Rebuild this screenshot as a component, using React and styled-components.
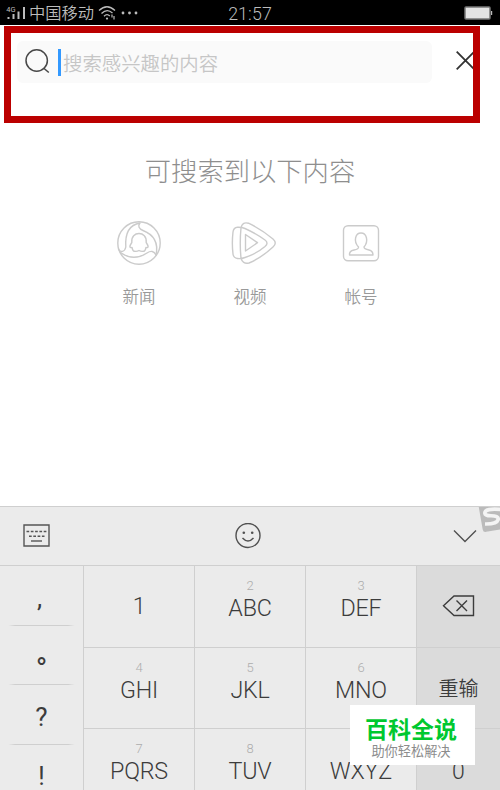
import React from "react";
import styled, { createGlobalStyle } from "styled-components";

const GlobalStyle = createGlobalStyle`
  * {
    box-sizing: border-box;
  }
  body {
    margin: 0;
    background-color: #fff;
    font-family: Roboto, "Noto Sans CJK SC", sans-serif;
  }
  svg {
    display: block;
    flex-shrink: 0;
  }
`;

const Screen = styled.div`
  position: relative;
  display: flex;
  flex-direction: column;
  width: 500px;
  height: 790px;
  overflow: hidden;
  background-color: #fff;
`;

const StatusBar = styled.div`
  display: grid;
  grid-template-columns: 1fr auto 1fr;
  align-items: center;
  height: 25px;
  padding: 0 7px 0 6px;
  background-color: #000;
  color: #bcbcbc;
`;

const StatusGroup = styled.div`
  display: flex;
  align-items: center;
  gap: ${(props) => props.$gap || 0}px;
  justify-content: ${(props) => (props.$end ? "flex-end" : "flex-start")};
`;

const Carrier = styled.span`
  margin: 0 4px 0 3px;
  padding-top: 1px;
  font-size: 16.3px;
  font-weight: 350;
  line-height: 24px;
  white-space: nowrap;
`;

const Clock = styled.span`
  font-size: 17.8px;
  font-weight: 300;
  letter-spacing: 0.1px;
  line-height: 25px;
  padding-left: 1px;
  padding-top: 1px;
`;

const SearchHeader = styled.header`
  display: flex;
  align-items: flex-start;
  height: 98px;
  padding: 16px 24px 0 17px;
`;

const SearchBox = styled.div`
  display: flex;
  align-items: center;
  width: 415px;
  height: 42px;
  padding-left: 8px;
  border-radius: 6px;
  background-color: #fafafa;
`;

const Caret = styled.span`
  width: 3px;
  height: 27px;
  margin: 0 2px 0 8px;
  background-color: #3399ff;
`;

const Placeholder = styled.span`
  color: #c6c6c6;
  font-size: 19.4px;
  font-weight: 350;
  line-height: 28px;
  padding-top: 5px;
`;

const CloseButton = styled.div`
  margin: 10px 0 0 24px;
`;

const Highlight = styled.div`
  position: absolute;
  top: 26px;
  left: 4px;
  width: 476px;
  height: 97px;
  border: 7px solid #bb0000;
`;

const Content = styled.main`
  display: flex;
  flex-direction: column;
  align-items: center;
  height: 383px;
  padding-top: 29px;
`;

const Title = styled.h1`
  margin: 0;
  color: #8e8e8e;
  font-size: 26.3px;
  font-weight: 300;
  line-height: 40px;
`;

const Categories = styled.div`
  display: grid;
  grid-template-columns: repeat(3, 111px);
  margin-top: 28px;
`;

const Category = styled.div`
  display: flex;
  flex-direction: column;
  align-items: center;
  gap: 20px;
  color: #999;
  font-size: 16.5px;
  font-weight: 350;
  line-height: 24px;
`;

const Keyboard = styled.section`
  flex: 1;
  min-height: 0;
  border-top: 1px solid #cfcfcf;
  background-color: #ebebeb;
  color: #3c3c3c;
`;

const Toolbar = styled.div`
  display: grid;
  grid-template-columns: 1fr auto 1fr;
  align-items: center;
  height: 58px;
  padding: 0 23px;
`;

const ToolbarItem = styled.div`
  display: flex;
  justify-content: ${(props) => props.$align || "flex-start"};
  margin-right: ${(props) => props.$offset || 0}px;
`;

const SogouBadge = styled.div`
  position: absolute;
  top: 507px;
  left: 476px;
  width: 24px;
  height: 26px;
  overflow: hidden;
`;

const Keys = styled.div`
  display: grid;
  grid-template-columns: 83px 333px 84px;
  border-top: 1px solid #cfcfcf;
`;

const Punctuation = styled.div`
  display: flex;
  flex-direction: column;
`;

const PunctuationKey = styled.div`
  height: 59.7px;
  padding-right: ${(props) => props.$shift || 0}px;
  padding-top: ${(props) => props.$drop}px;
  font-size: ${(props) => props.$size || 26}px;
  line-height: 30px;
  text-align: center;
  background: linear-gradient(
      90deg,
      transparent 10%,
      #cfcfcf 18%,
      #cfcfcf 82%,
      transparent 90%
    )
    bottom / 100% 1px no-repeat;
`;

const NumberPad = styled.div`
  display: grid;
  grid-template-columns: repeat(3, 111px);
  grid-auto-rows: 81.5px;
`;

const Key = styled.div`
  display: flex;
  flex-direction: column;
  align-items: center;
  border-left: 1px solid #cfcfcf;
  border-bottom: 1px solid #cfcfcf;
  padding-top: 10px;
`;

const Digit = styled.span`
  height: 18px;
  color: #adadad;
  font-size: 13px;
  font-weight: 300;
  line-height: 19px;
`;

const Letters = styled.span`
  font-size: 23.3px;
  font-weight: 300;
  line-height: 28px;
  margin-top: ${(props) => (props.$single ? "-2px" : "0")};
  letter-spacing: -0.2px;
`;

const Actions = styled.div`
  display: grid;
  grid-auto-rows: 81.5px;
  background-color: #dbdbdb;
  border-left: 1px solid #cfcfcf;
`;

const Action = styled.div`
  display: flex;
  align-items: center;
  justify-content: center;
  padding-top: ${(props) => props.$drop || 0}px;
  border-bottom: 1px solid #cfcfcf;
  font-size: ${(props) => props.$size || 20}px;
  font-weight: ${(props) => (props.$size ? 300 : 350)};
`;

const Watermark = styled.div`
  position: absolute;
  left: 350px;
  top: 705px;
  display: flex;
  flex-direction: column;
  align-items: center;
  width: 125px;
  height: 60px;
  padding: 10px 3px 0 0;
  background-color: #fff;
`;

const WatermarkName = styled.strong`
  color: #00c82f;
  font-size: 23px;
  font-weight: 700;
  line-height: 31px;
`;

const WatermarkSlogan = styled.span`
  color: #8c8c8c;
  font-size: 13.2px;
  font-weight: 400;
  line-height: 12px;
`;

const SignalIcon = () => (
  <svg width="20" height="16" viewBox="0 0 20 16" fill="#bcbcbc">
    <text x="0.3" y="6.500" fontSize="7.500" fontFamily="Roboto">
      4G
    </text>
    <path d="M1.500 12h2v2h-2zM6.500 9h2v5h-2zM11.500 6.500h2v7.500h-2zM17 2h2v12h-2z" />
  </svg>
);

const WifiIcon = () => (
  <svg width="18" height="16" viewBox="0 0 18 16" fill="none" stroke="#bcbcbc" strokeWidth="1.3">
    <path d="M1 5.500Q9-2 17 5.500M3.500 8.500Q9 3 14.500 8M6 11.200Q9 8.200 11.800 11" />
    <circle cx="9" cy="13.600" r="1.100" fill="#bcbcbc" stroke="none" />
    <path d="M14 12.500V9.500M16 11v3.500" strokeWidth="1.200" />
  </svg>
);

const DotsIcon = () => (
  <svg width="18" height="4" viewBox="0 0 18 4" fill="#bcbcbc">
    <circle cx="2" cy="2" r="1.400" />
    <circle cx="8.500" cy="2" r="1.400" />
    <circle cx="15" cy="2" r="1.400" />
  </svg>
);

const BatteryIcon = () => (
  <svg width="29" height="14" viewBox="0 0 29 14">
    <rect x="1" y="1" width="25" height="12" rx="1" fill="#e4e4e4" stroke="#777" strokeWidth="1.500" />
    <path d="M27 5h1.200v4H27z" fill="#bbb" />
  </svg>
);

const SearchIcon = () => (
  <svg width="25" height="26" viewBox="0 0 25 26" fill="none" stroke="#484848" strokeWidth="1.500">
    <circle cx="11.700" cy="11.500" r="10.700" />
    <path d="M18.500 19l5.300 4.500" />
  </svg>
);

const CloseIcon = () => (
  <svg width="19" height="19" viewBox="0 0 19 19" stroke="#333" strokeWidth="1.800">
    <path d="M.7.7l17.600 17.600M18.300.7L.7 18.300" />
  </svg>
);

const lineIcon = {
  width: 46,
  height: 46,
  viewBox: "0 0 46 46",
  fill: "none",
  stroke: "#cbcbcb",
  strokeWidth: 1.4,
  strokeLinejoin: "round",
  strokeLinecap: "round",
};

const NewsIcon = () => (
  <svg {...lineIcon}>
    <circle cx="23" cy="23" r="21.200" />
    <path d="M2.500 29C4 33 9 32 9.800 27C9 15 12 5 24 3C21.500 6 23 9 27 10.500C36 14 43 21 40 35" />
    <path d="M4.500 32.500C15 40 24 37.500 31 33Q37 29 40 35" />
    <path d="M15.800 22.500C14.500 10.500 31.500 10.500 30.200 22.500C32.500 26 33 28 30 27.500Q29.500 30 28.500 31Q25.500 32 23 30.500Q20.500 32 17.500 31Q16.500 30 16 27.500C13 28 13.500 26 15.800 22.500Z" />
  </svg>
);

const VideoIcon = () => (
  <svg {...lineIcon} width="54" viewBox="-4 0 54 46">
    <path d="M14 8Q15 1.500 21.500 3.200Q34 9 46 19Q50.500 23 46 27Q34 38 22 43Q15.500 44.500 14 38Q12.500 23 14 8Z" />
    <path d="M6 12Q6.500 7.500 10.500 7.200Q14.500 7 18 8.500Q29 13.500 38 20Q42 23 38 26.500Q29 34 18 37.500Q14 39 10.500 38.500Q6.500 38 6 34Q4.700 23 6 12Z" />
    <path d="M18.500 14.500v16.500L30.500 22.700z" />
  </svg>
);

const AccountIcon = () => (
  <svg {...lineIcon}>
    <rect x="5.500" y="5.700" width="35" height="35" rx="4.500" />
    <path d="M20.500 27C15 21 17.500 13 23 13S31 21 26 27Q26 29 31 30Q35 31 35 35H11.500Q11 31 16 30Q21 29 20.500 27Z" />
  </svg>
);

const KeyboardIcon = () => (
  <svg width="27" height="24" viewBox="0 0 27 24" fill="none" stroke="#555" strokeWidth="1.400">
    <path d="M1 1h25v21H1z" />
    <path d="M3.500 7.500h20" strokeDasharray="2.700 1.600" />
    <path d="M6 12.200h15.500" strokeDasharray="2.700 1.600" />
    <path d="M8 17h11" />
  </svg>
);

const SmileIcon = () => (
  <svg width="26" height="26" viewBox="0 0 26 26" fill="none" stroke="#505050" strokeWidth="1.400">
    <circle cx="13" cy="12.500" r="12" />
    <path d="M7.500 15Q13 21 18.500 15" />
    <circle cx="8.800" cy="9.700" r="1.300" fill="#505050" stroke="none" />
    <circle cx="17.200" cy="9.700" r="1.300" fill="#505050" stroke="none" />
  </svg>
);

const ChevronIcon = () => (
  <svg width="24" height="14" viewBox="0 0 24 14" fill="none" stroke="#505050" strokeWidth="1.400">
    <path d="M1 1.500l11 11 11-11" />
  </svg>
);

const BackspaceIcon = () => (
  <svg width="33" height="22" viewBox="0 0 33 22" fill="none" stroke="#3c3c3c" strokeWidth="1.400">
    <path d="M12 1h19.500v19.500H12L1.500 10.800z" />
    <path d="M14.500 5.500l10.500 10.500M25 5.500L14.500 16" />
  </svg>
);

const SogouIcon = () => (
  <svg width="32" height="28" viewBox="0 0 32 28">
    <rect x="5" y="-6" width="30" height="30" rx="3" fill="#bbb" transform="rotate(-10 14 12)" />
    <path
      d="M25 2.500Q9 1 8.800 6Q9 8.800 15 8.800Q22.500 8.800 22.300 12.300Q21 17.200 9 17"
      fill="none"
      stroke="#f4f4f4"
      strokeWidth="3.600"
    />
  </svg>
);

const categories = [
  { name: "新闻", icon: <NewsIcon /> },
  { name: "视频", icon: <VideoIcon /> },
  { name: "帐号", icon: <AccountIcon /> },
];

const punctuation = [
  { mark: ",", drop: 17, shift: 4 },
  { mark: "°", drop: 29, size: 31 },
  { mark: "?", drop: 17 },
  { mark: "!", drop: 17, size: 25 },
];

const keys = [
  { letters: "1" },
  { digit: 2, letters: "ABC" },
  { digit: 3, letters: "DEF" },
  { digit: 4, letters: "GHI" },
  { digit: 5, letters: "JKL" },
  { digit: 6, letters: "MNO" },
  { digit: 7, letters: "PQRS" },
  { digit: 8, letters: "TUV" },
  { digit: 9, letters: "WXYZ" },
];

export default function App() {
  return (
    <Screen>
      <GlobalStyle />
      <StatusBar>
        <StatusGroup>
          <SignalIcon />
          <Carrier>中国移动</Carrier>
          <StatusGroup $gap={5}>
            <WifiIcon />
            <DotsIcon />
          </StatusGroup>
        </StatusGroup>
        <Clock>21:57</Clock>
        <StatusGroup $end>
          <BatteryIcon />
        </StatusGroup>
      </StatusBar>

      <SearchHeader>
        <SearchBox>
          <SearchIcon />
          <Caret />
          <Placeholder>搜索感兴趣的内容</Placeholder>
        </SearchBox>
        <CloseButton>
          <CloseIcon />
        </CloseButton>
      </SearchHeader>
      <Highlight />

      <Content>
        <Title>可搜索到以下内容</Title>
        <Categories>
          {categories.map((category) => (
            <Category key={category.name}>
              {category.icon}
              {category.name}
            </Category>
          ))}
        </Categories>
      </Content>

      <Keyboard>
        <Toolbar>
          <ToolbarItem>
            <KeyboardIcon />
          </ToolbarItem>
          <ToolbarItem $offset={5}>
            <SmileIcon />
          </ToolbarItem>
          <ToolbarItem $align="flex-end">
            <ChevronIcon />
          </ToolbarItem>
        </Toolbar>
        <Keys>
          <Punctuation>
            {punctuation.map((item) => (
              <PunctuationKey
                key={item.mark}
                $drop={item.drop}
                $shift={item.shift}
                $size={item.size}
              >
                {item.mark}
              </PunctuationKey>
            ))}
          </Punctuation>
          <NumberPad>
            {keys.map((key) => (
              <Key key={key.letters}>
                <Digit>{key.digit}</Digit>
                <Letters $single={!key.digit}>{key.letters}</Letters>
              </Key>
            ))}
          </NumberPad>
          <Actions>
            <Action>
              <BackspaceIcon />
            </Action>
            <Action>重输</Action>
            <Action $size={23} $drop={4}>
              0
            </Action>
          </Actions>
        </Keys>
      </Keyboard>

      <SogouBadge>
        <SogouIcon />
      </SogouBadge>
      <Watermark>
        <WatermarkName>百科全说</WatermarkName>
        <WatermarkSlogan>助你轻松解决</WatermarkSlogan>
      </Watermark>
    </Screen>
  );
}
